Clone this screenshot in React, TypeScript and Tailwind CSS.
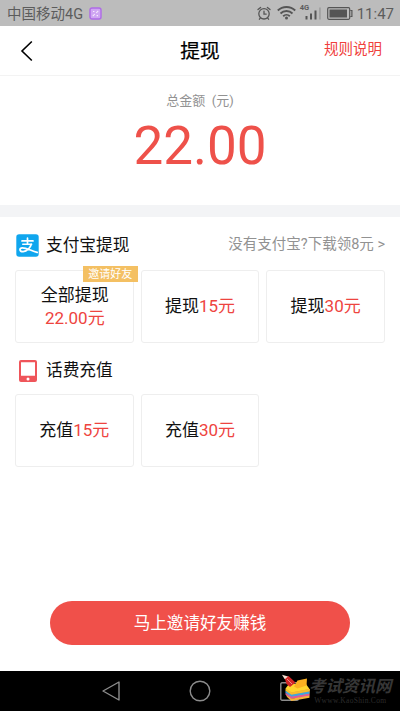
import React from 'react';

interface Option {
  id: string;
  label: string;
  amount: string;
  badge?: string;
  stacked?: boolean;
}

const withdrawOptions: Option[] = [
  { id: 'all', label: '全部提现', amount: '22.00元', badge: '邀请好友', stacked: true },
  { id: 'w15', label: '提现', amount: '15元' },
  { id: 'w30', label: '提现', amount: '30元' },
];

const rechargeOptions: Option[] = [
  { id: 'r15', label: '充值', amount: '15元' },
  { id: 'r30', label: '充值', amount: '30元' },
];

const StatusBar = () => (
  <div className="flex h-[26px] shrink-0 items-center justify-between bg-[#bcbcbc] pl-[7px] pr-[6px] pt-[2px] text-[#5c5c5c]">
    <div className="flex items-center">
      <span className="pt-[2px] text-[14.5px] leading-5">中国移动4G</span>
      <svg className="mb-[2px] ml-[6px] h-[13px] w-[13px]" viewBox="0 0 13 13" fill="none">
        <rect x="1" y="1" width="11" height="11" rx="2" fill="#cfa6f2" stroke="#ae6be6" strokeWidth="1.4" />
        <path d="M3.8 9.2l2-2.2M7.2 6l2-2.2M4 4.5h1.4M7.6 8.6H9" stroke="#f6ebfd" strokeWidth="1.1" />
      </svg>
    </div>
    <div className="flex items-center">
      <svg className="mb-px h-[15px] w-[14px]" viewBox="0 0 14 15" fill="none" stroke="#555" strokeWidth="1.3" strokeLinecap="round">
        <circle cx="7" cy="7.8" r="5.2" />
        <path d="M7 5.2V8.1h2.2M1 3.6L3.6 1.4M13 3.6L10.4 1.4M3.3 12.1L2.4 13.2M10.7 12.1l.9 1.1" />
      </svg>
      <svg className="mb-[4px] ml-[6px] h-[15px] w-[19px]" viewBox="0 0 19 15" fill="none" stroke="#555" strokeWidth="1.9">
        <path d="M.8 5.5a12.4 12.4 0 0 1 17.4 0M3.5 8.5a8.5 8.5 0 0 1 12 0M6.2 11.2a4.7 4.7 0 0 1 6.6 0" />
        <circle cx="9.5" cy="13.1" r="1.5" fill="#555" stroke="none" />
      </svg>
      <div className="relative mb-[4px] ml-[4px] h-[16px] w-[22px]">
        <span className="absolute left-0 top-[-1px] text-[7.5px] font-bold leading-[9px]">4G</span>
        <svg className="h-full w-full" viewBox="0 0 22 16">
          <path d="M5.5 12h2v3.5h-2zM10 9.5h2v6h-2zM14.5 6.5h2v9h-2z" fill="#555" />
          <path d="M19.2 3.5h1.5v12h-1.5z" fill="#9c9c9c" />
        </svg>
      </div>
      <svg className="mb-px ml-[5px] h-[13px] w-[26px]" viewBox="0 0 26 13" fill="none">
        <rect x=".7" y=".7" width="22" height="11.6" rx="1.2" stroke="#555" strokeWidth="1.2" />
        <path d="M2.5 2.5h17.5v8H2.5z" fill="#555" />
        <path d="M23.3 3.5h1.6v6h-1.6" stroke="#555" strokeWidth="1.2" />
      </svg>
      <span className="ml-[4px] text-[15px] leading-5">11:47</span>
    </div>
  </div>
);

const AlipayIcon = () => (
  <svg className="ml-px h-[23px] w-[23px]" viewBox="0 0 23 23" fill="none">
    <rect x=".3" y=".3" width="22.4" height="22.4" rx="2.8" fill="#10a6ee" />
    <g stroke="#fff" strokeLinecap="round">
      <path d="M6 6.9h11M11.5 4.2v5.6" strokeWidth="1.7" />
      <path d="M6.7 10.2h9" strokeWidth="1.4" />
      <path d="M15.2 10.4c-1 3.2-4.1 7-8.1 7.2-3.8.1-4.2-3.6-.7-3.8 3.4-.1 8.4 2.7 14.8 4.6" strokeWidth="1.8" />
    </g>
  </svg>
);

const PhoneIcon = () => (
  <svg className="ml-[4px] h-[22px] w-[18px]" viewBox="0 0 18 22">
    <path
      d="M2 0h14a2 2 0 0 1 2 2v18a2 2 0 0 1-2 2H2a2 2 0 0 1-2-2V2A2 2 0 0 1 2 0zM2 2.2v13.6h14V2.2z"
      fill="#ef555a"
      fillRule="evenodd"
    />
    <circle cx="9" cy="18.9" r="1.5" fill="#fff" />
  </svg>
);

const OptionCard: React.FC<{ option: Option }> = ({ option }) => (
  <button
    className={`relative flex h-[73px] items-center justify-center rounded-[3px] border border-[#eeeeee] bg-white text-[17px] leading-[23px] ${
      option.stacked ? 'flex-col pl-px' : ''
    }`}
  >
    <span className="text-[#111]">{option.label}</span>
    <span className="text-[#ee4440]">{option.amount}</span>
    {option.badge && (
      <span className="absolute right-[-5px] top-[-5px] flex h-[16px] w-[55px] items-center justify-center bg-[#f4c063] pt-px text-[11px] leading-none text-white">
        {option.badge}
      </span>
    )}
  </button>
);

const SiteMark = () => (
  <div className="absolute left-[278px] top-[3px] flex items-start">
    <svg className="h-[28px] w-[32px]" viewBox="0 0 32 28">
      <path d="M8 15l3 9.5 20-1.5 1-8z" fill="#ee9b32" />
      <path d="M7.5 14.5L11 10h17l3.5 5-18 3.5z" fill="#ffd52e" />
      <path d="M7.5 14.5l6 4 18-3.5v2.3L13.5 21l-6-4z" fill="#f7bd2c" />
      <path d="M7.5 16.8l6 4 18-3.3v2.3L13.5 23l-6-4z" fill="#3fa5dd" />
      <path d="M7.5 18.8l6 4 18-3v2L13.5 25l-6-4.2z" fill="#e0569b" />
      <path d="M8 20.8l5.5 4 18-3.3v2.2L13.5 27 9 23z" fill="#f5b23a" />
      <path d="M16 12.5l3.5-6L29 4.5l-.5 7-9 3z" fill="#fbb021" />
      <path d="M6.5 3.5l4-1.5 7 6.5-5.5 4.5-3.5-3z" fill="#d42626" />
      <path d="M4 .8l6 1.7-3.2 2.8z" fill="#f3ded0" />
      <path d="M9 5l5 5" stroke="#f4b5b0" strokeWidth=".7" />
    </svg>
    <div className="-ml-[1px] flex flex-col items-center pt-[4px] text-[#363636]">
      <span className="text-[16.5px] font-bold italic leading-[18px]">考试资讯网</span>
      <span className="font-['Liberation_Serif',serif] text-[7.5px] leading-[9px] tracking-[0.3px] text-[#2c2c2c]">Wwww.KaoShin.Com</span>
    </div>
  </div>
);

export default function App() {
  return (
    <div className="flex h-[711px] w-[400px] flex-col overflow-hidden bg-white font-[Roboto,'Noto_Sans_CJK_SC',sans-serif]">
      <StatusBar />

      <header className="grid h-[50px] shrink-0 grid-cols-[1fr_auto_1fr] items-center border-b border-[#f3f3f3] px-[18px]">
        <button className="pl-[2px]" aria-label="返回">
          <svg className="h-[22px] w-[14px]" viewBox="0 0 14 22" fill="none" stroke="#000" strokeWidth="1.6">
            <path d="M11.8 1.5L2 11l9.8 9.5" />
          </svg>
        </button>
        <h1 className="pt-[2px] text-[19.8px] font-normal leading-7 text-black [-webkit-text-stroke:0.2px_black]">提现</h1>
        <button className="justify-self-end pb-[2px] text-[14.5px] leading-5 text-[#f0403c]">规则说明</button>
      </header>

      <section className="flex h-[129px] shrink-0 flex-col items-center pt-[15px]">
        <p className="text-[13px] leading-5 text-[#929292]">总金额&nbsp; (元)</p>
        <p className="mt-[7px] text-[53px] leading-[56px] text-[#ee514a]">22.00</p>
      </section>
      <div className="h-[12px] shrink-0 bg-[#f3f4f6]" />

      <main className="flex flex-1 flex-col px-[15px]">
        <div className="flex h-[53px] items-center pt-[4px]">
          <AlipayIcon />
          <h2 className="ml-[7px] text-[16.7px] leading-6 text-[#111]">支付宝提现</h2>
          <span className="ml-auto pb-[2px] text-[14.5px] leading-5 text-[#929292]">没有支付宝?下载领8元 &gt;</span>
        </div>
        <div className="grid grid-cols-3 gap-[7px]">
          {withdrawOptions.map(option => <OptionCard key={option.id} option={option} />)}
        </div>

        <div className="flex h-[51px] items-center pt-[4px]">
          <PhoneIcon />
          <h2 className="ml-[9px] text-[16.7px] leading-6 text-[#111]">话费充值</h2>
        </div>
        <div className="grid grid-cols-3 gap-[7px]">
          {rechargeOptions.map(option => <OptionCard key={option.id} option={option} />)}
        </div>

        <button className="mx-auto mb-[26px] mt-auto h-[44px] w-[300px] shrink-0 rounded-full bg-[#f0504a] pt-[2px] text-[16.6px] leading-6 text-white">
          马上邀请好友赚钱
        </button>
      </main>

      <nav className="relative flex h-[40px] shrink-0 items-center justify-between bg-black pl-[102px] pr-[101px]">
        <svg className="h-[20px] w-[19px]" viewBox="0 0 19 20" fill="none" stroke="#8c8c8c" strokeWidth="1.4" strokeLinejoin="round">
          <path d="M17 1v18L1 10z" />
        </svg>
        <svg className="mr-[2px] h-[22px] w-[22px]" viewBox="0 0 22 22" fill="none" stroke="#8c8c8c" strokeWidth="1.4">
          <circle cx="11" cy="11" r="9.8" />
        </svg>
        <svg className="h-[19px] w-[19px]" viewBox="0 0 19 19" fill="none" stroke="#8c8c8c" strokeWidth="1.4">
          <rect x=".8" y=".8" width="17.4" height="17.4" rx="1.2" />
        </svg>
        <SiteMark />
      </nav>
    </div>
  );
}
